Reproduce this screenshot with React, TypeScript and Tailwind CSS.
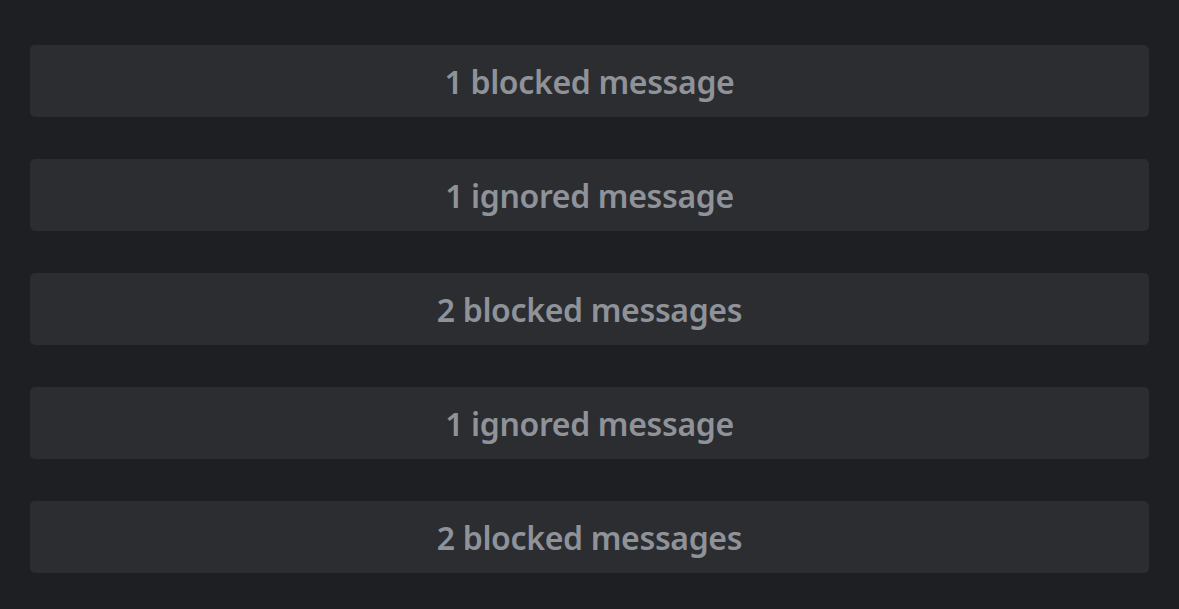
export default function App() {
  const items = [
    "1 blocked message",
    "1 ignored message",
    "2 blocked messages",
    "1 ignored message",
    "2 blocked messages",
  ];
  return (
    <div className="w-[1179px] h-[609px] bg-[#1e1f22] pt-[45px] pl-[30px] pr-[30px] flex flex-col gap-[42px]">
      {items.map((t, i) => (
        <div
          key={i}
          className="h-[72px] w-[1119px] rounded-[5px] bg-[#2b2d31] flex items-center justify-center pt-[2px] text-[#8f9399] text-[32px] font-semibold tracking-[-0.35px]"
          style={{ fontFamily: '"Noto Sans", "Open Sans", sans-serif' }}
        >
          {t}
        </div>
      ))}
    </div>
  );
}
